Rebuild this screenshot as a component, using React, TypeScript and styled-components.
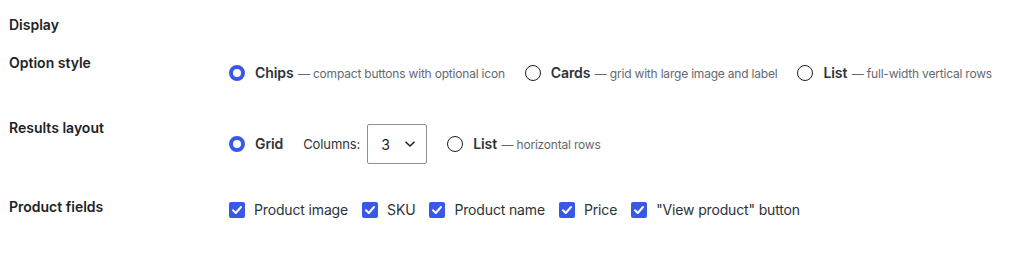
import React from "react";
import styled, { createGlobalStyle } from "styled-components";

const Global = createGlobalStyle`
  body { margin: 0; background: #fff; font-family: Inter, "Noto Sans", sans-serif; color: #1e1e1e; }
`;

const Page = styled.div`
  padding: 16px 0 0 9px;
  display: flex;
  flex-direction: column;
`;

const Heading = styled.h2`
  margin: 0;
  font-size: 14px;
  font-weight: 600;
  line-height: 18px;
  color: #1d2327;
`;

const Row = styled.div<{ $top: number }>`
  display: grid;
  grid-template-columns: 220px 1fr;
  margin-top: ${(p) => p.$top}px;
`;

const Label = styled.div`
  font-size: 14px;
  font-weight: 600;
  line-height: 18px;
  color: #1d2327;
`;

const Controls = styled.div<{ $pad: number; $gap: number }>`
  display: flex;
  align-items: center;
  gap: ${(p) => p.$gap}px;
  padding-top: ${(p) => p.$pad}px;
`;

const Choice = styled.label<{ $gap?: number }>`
  display: flex;
  align-items: center;
  gap: ${(p) => p.$gap ?? 10}px;
  line-height: 18px;
`;

const Radio = styled.span<{ $on?: boolean }>`
  box-sizing: border-box;
  width: 16px;
  height: 16px;
  border-radius: 50%;
  border: ${(p) => (p.$on ? "4.5px solid #3858e9" : "1px solid #1e1e1e")};
  background: #fff;
  flex: none;
`;

const Name = styled.span`
  font-size: 14px;
  font-weight: 600;
  color: #2c3338;
  letter-spacing: -0.1px;
`;

const Desc = styled.span`
  font-size: 12px;
  color: #646970;
  letter-spacing: -0.2px;
`;

const Small = styled.span`
  font-size: 13px;
  color: #2c3338;
  letter-spacing: -0.1px;
`;

const SelectBox = styled.div`
  box-sizing: border-box;
  width: 60px;
  height: 40px;
  border: 1px solid #8c8f94;
  border-radius: 2px;
  display: flex;
  align-items: center;
  justify-content: space-between;
  padding: 0 10px 0 13px;
  font-size: 14px;
  color: #1e1e1e;
`;

const ColumnsGroup = styled.div`
  display: flex;
  align-items: center;
  gap: 7px;
`;

const Check = styled.span`
  width: 16px;
  height: 16px;
  border-radius: 2px;
  background: #3858e9;
  display: flex;
  align-items: center;
  justify-content: center;
  flex: none;
`;

const CheckText = styled.span`
  font-size: 14px;
  color: #2c3338;
  letter-spacing: -0.15px;
`;

const CheckMark = () => (
  <svg width="12" height="12" viewBox="0 0 12 12">
    <path d="M2 6.3 L4.8 9 L10 3" fill="none" stroke="#fff" strokeWidth="2" strokeLinecap="round" strokeLinejoin="round" />
  </svg>
);

const Chevron = () => (
  <svg width="12" height="8" viewBox="0 0 12 8">
    <path d="M1.5 1.8 L6 6 L10.5 1.8" fill="none" stroke="#1e1e1e" strokeWidth="1.5" />
  </svg>
);

const fields = ["Product image", "SKU", "Product name", "Price", '"View product" button'];

export default function App() {
  return (
    <>
      <Global />
      <Page>
        <Heading>Display</Heading>
        <Row $top={20}>
          <Label>Option style</Label>
          <Controls $pad={9} $gap={20}>
            <Choice>
              <Radio $on />
              <span>
                <Name>Chips</Name> <Desc>— compact buttons with optional icon</Desc>
              </span>
            </Choice>
            <Choice>
              <Radio />
              <span>
                <Name>Cards</Name> <Desc>— grid with large image and label</Desc>
              </span>
            </Choice>
            <Choice>
              <Radio />
              <span>
                <Name>List</Name> <Desc>— full-width vertical rows</Desc>
              </span>
            </Choice>
          </Controls>
        </Row>
        <Row $top={36}>
          <Label>Results layout</Label>
          <Controls $pad={5} $gap={20}>
            <Choice>
              <Radio $on />
              <Name>Grid</Name>
            </Choice>
            <ColumnsGroup>
              <Small>Columns:</Small>
              <SelectBox>
                <span>3</span>
                <Chevron />
              </SelectBox>
            </ColumnsGroup>
            <Choice>
              <Radio />
              <span>
                <Name>List</Name> <Desc>— horizontal rows</Desc>
              </span>
            </Choice>
          </Controls>
        </Row>
        <Row $top={34}>
          <Label>Product fields</Label>
          <Controls $pad={3} $gap={14}>
            {fields.map((f) => (
              <Choice key={f} $gap={9}>
                <Check>
                  <CheckMark />
                </Check>
                <CheckText>{f}</CheckText>
              </Choice>
            ))}
          </Controls>
        </Row>
      </Page>
    </>
  );
}
